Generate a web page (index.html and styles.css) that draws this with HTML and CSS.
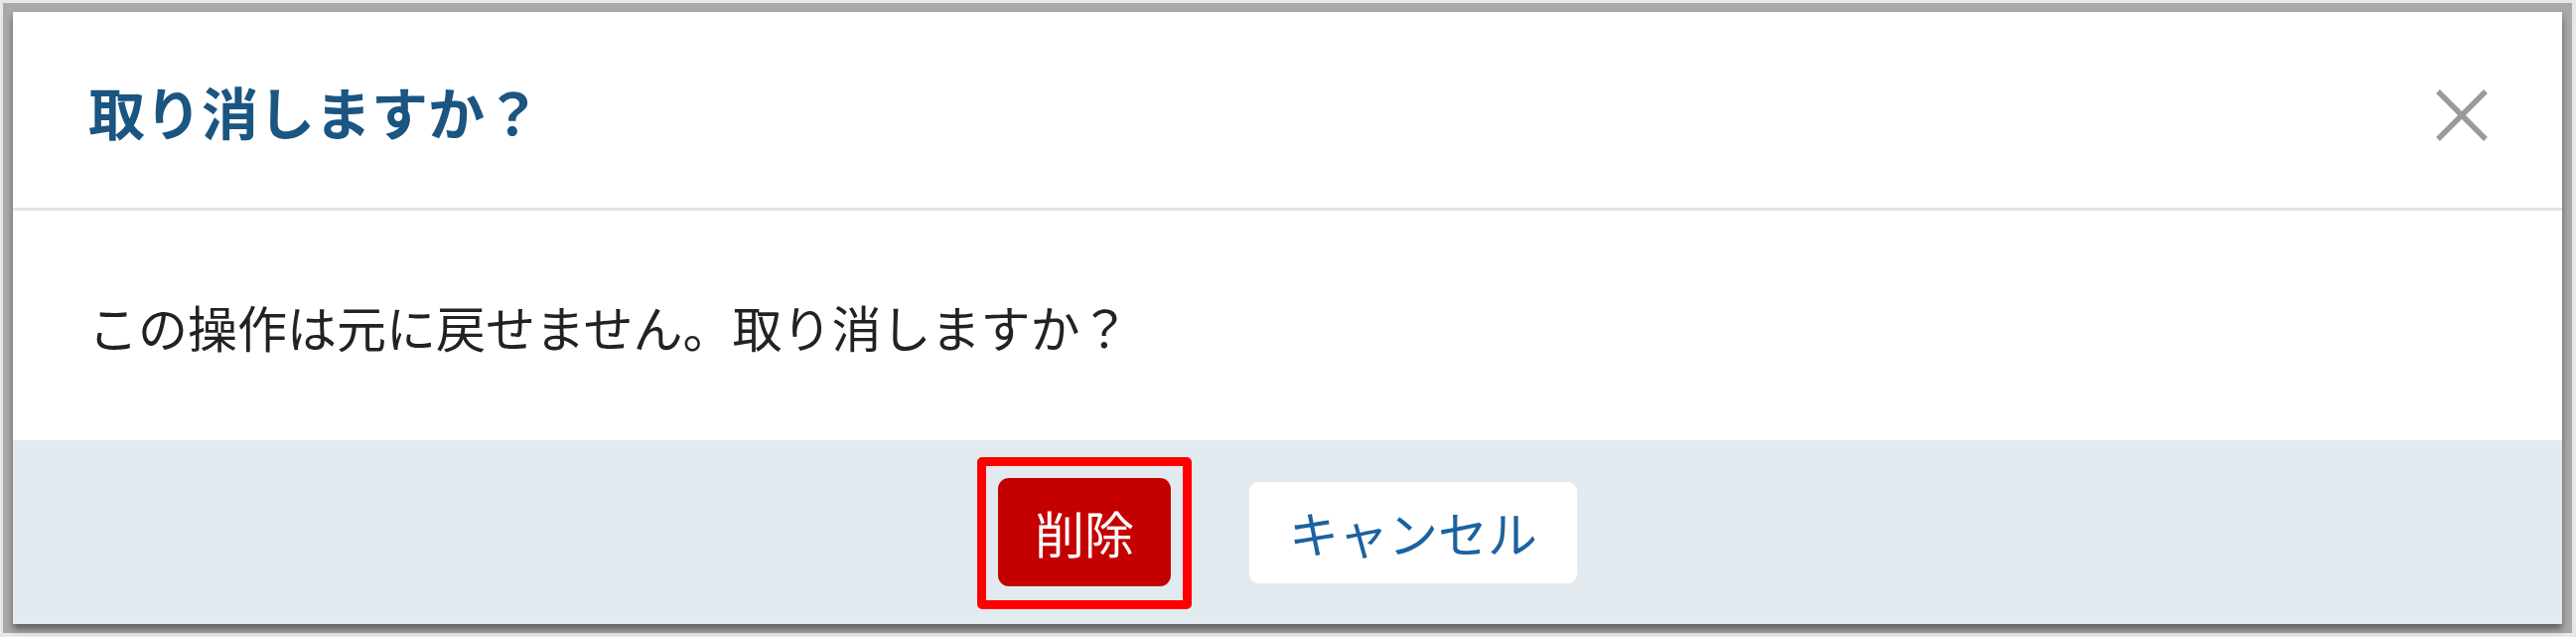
FILE: index.html
```html
<!DOCTYPE html>
<html lang="ja">
<head>
    <meta charset="utf-8">
    <meta name="viewport" content="width=device-width, initial-scale=1">
    <title>取り消し確認</title>
    <link rel="stylesheet" href="styles.css">
</head>
<body>
<div class="backdrop">
    <div class="dialog">
        <div class="dialog-header">
            <h2 class="dialog-title">取り消しますか？</h2>
            <button class="close" aria-label="閉じる">
                <svg width="54" height="54" viewBox="0 0 54 54">
                    <path d="M3 3 L51 51 M51 3 L3 51" stroke="#9a9a9a" stroke-width="5.5" fill="none"/>
                </svg>
            </button>
        </div>
        <div class="dialog-body">
            <p>この操作は元に戻せません。取り消しますか？</p>
        </div>
        <div class="dialog-footer">
            <button class="btn btn-danger">削除</button>
            <button class="btn btn-cancel">キャンセル</button>
        </div>
    </div>
</div>
</body>
</html>
```

FILE: styles.css
```css
html, body {
    height: 100%;
}
body {
    margin: 0;
    padding: 3px 4px 4px 3px;
    box-sizing: border-box;
    background-color: #e8e8e8;
    font-family: "Noto Sans CJK JP", "Noto Sans", sans-serif;
}
.backdrop {
    height: 100%;
    box-sizing: border-box;
    padding: 9px 10px 9px 10px;
    background-color: #a9a9a9;
}
.dialog {
    height: 100%;
    display: flex;
    flex-direction: column;
    background-color: #fff;
    box-shadow: 0 5px 7px rgba(0, 0, 0, 0.45);
}
.dialog-header {
    height: 197px;
    display: flex;
    align-items: center;
    justify-content: space-between;
    padding: 0 74px 0 76px;
    border-bottom: 3px solid #e4e4e4;
}
.dialog-title {
    margin: 0;
    font-size: 57px;
    font-weight: bold;
    color: #1b5581;
}
.close {
    border: 0;
    padding: 0;
    background: none;
    display: flex;
    margin-top: 10px;
}
.dialog-body {
    height: 231px;
    display: flex;
    align-items: center;
    padding: 0 76px;
}
.dialog-body p {
    margin: 0;
    font-size: 50px;
    color: #222;
}
.dialog-footer {
    flex: 1;
    display: flex;
    align-items: center;
    justify-content: center;
    gap: 79px;
    background-color: #e2eaf0;
}
.btn {
    font-family: inherit;
    font-size: 50px;
    line-height: 1;
    border: 0;
}
.btn-danger {
    position: relative;
    padding: 29px 37px 30px;
    border-radius: 11px;
    background-color: #c40000;
    color: #fff;
}
.btn-danger::after {
    content: "";
    position: absolute;
    top: -21px;
    left: -21px;
    right: -21px;
    bottom: -23px;
    border: 9px solid #ff0000;
    border-radius: 5px;
}
.btn-cancel {
    padding: 25px 40px 27px;
    border-radius: 9px;
    background-color: #fff;
    color: #1b62a0;
}
```
